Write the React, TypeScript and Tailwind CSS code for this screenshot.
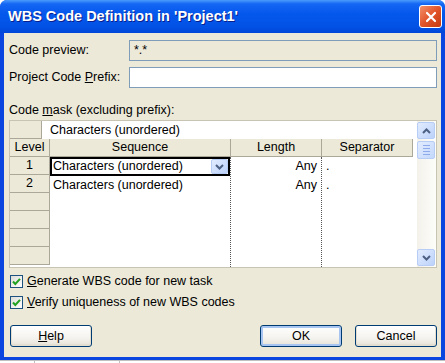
import React from 'react'

const ui = "font-['Liberation_Sans',Arial,sans-serif] text-[12.5px] text-black"

function Chevron({ up, className }: { up?: boolean; className?: string }) {
  return (
    <svg width="9" height="6" viewBox="0 0 9 6" className={className}>
      <path
        d={up ? 'M1 5 L4.5 1.5 L8 5' : 'M1 1 L4.5 4.5 L8 1'}
        fill="none"
        stroke="#4d6185"
        strokeWidth="2"
      />
    </svg>
  )
}

function BlueButton({ up, className }: { up?: boolean; className?: string }) {
  return (
    <div
      className={`flex items-center justify-center rounded-[2px] border border-[#b7cdf5] bg-[linear-gradient(135deg,#e2ecff,#bcd2fa)] ${className ?? ''}`}
    >
      <Chevron up={up} />
    </div>
  )
}

function Checkbox({ label, hot }: { label: string; hot: string }) {
  const rest = label.slice(1)
  return (
    <div className="flex h-[16px] items-center gap-[4px] pl-[1px]">
      <div className="flex h-[13px] w-[13px] items-center justify-center border border-[#1c5180] bg-[linear-gradient(135deg,#dcdcd7,#ffffff)]">
        <svg width="9" height="9" viewBox="0 0 9 9">
          <path d="M1 4.5 L3.3 7 L8 1.8" fill="none" stroke="#21a121" strokeWidth="2" />
        </svg>
      </div>
      <span>
        <span className="underline">{hot}</span>
        {rest}
      </span>
    </div>
  )
}

function XpButton({ children, focused, className }: { children: React.ReactNode; focused?: boolean; className?: string }) {
  return (
    <div
      className={`flex h-[22px] items-center justify-center rounded-[3px] border border-[#003c74] bg-[linear-gradient(to_bottom,#ffffff_0%,#f4f3ee_60%,#e6e2d6_100%)] ${
        focused ? 'shadow-[inset_0_0_0_2px_#a8c4f0]' : 'shadow-[inset_0_-1px_0_1px_#e3ded0]'
      } ${className ?? ''}`}
    >
      {children}
    </div>
  )
}

const levelCell = 'h-[18px] border-b border-r border-[#aca899] bg-[#ece9d8] flex items-center justify-center'
const header = 'h-[18px] border-b border-r border-[#aca899] bg-[#ece9d8] flex items-center justify-center'

export default function App() {
  return (
    <div className={`flex h-[363px] w-[445px] flex-col overflow-hidden bg-white ${ui}`}>
      <div className="flex h-[360px] flex-col overflow-hidden rounded-t-[7px] bg-[#0b45e0]">
        {/* title bar */}
        <div className="flex h-[33px] shrink-0 items-center justify-between bg-[linear-gradient(to_bottom,#4a9bfc_0%,#1466f4_12%,#0558ec_40%,#0252e6_80%,#0147d8_100%)] pl-[8px] pr-[3px]">
          <span className="font-['Liberation_Sans',Arial,sans-serif] text-[14.5px] font-bold text-white [text-shadow:1px_1px_0_#0a1f8c]">
            WBS Code Definition in 'Project1'
          </span>
          <div className="flex h-[23px] w-[23px] items-center justify-center rounded-[3px] border border-white bg-[linear-gradient(135deg,#f2906a,#e2542a_50%,#c43a10)]">
            <svg width="12" height="12" viewBox="0 0 12 12">
              <path d="M2 2 L10 10 M10 2 L2 10" stroke="white" strokeWidth="2.2" strokeLinecap="round" />
            </svg>
          </div>
        </div>

        {/* body */}
        <div className="mx-[4px] mb-[3px] flex flex-1 flex-col bg-[#ece9d8] pl-[5px] pr-[4px] pt-[7px]">
          <div className="flex h-[21px] items-center">
            <span className="w-[120px]">Code preview:</span>
            <div className="flex h-[21px] flex-1 items-center border border-[#7f9db9] bg-[#ece9d8] pl-[4px]">*.*</div>
          </div>
          <div className="mt-[6px] flex h-[21px] items-center">
            <span className="w-[120px]">
              Project Code <span className="underline">P</span>refix:
            </span>
            <div className="h-[21px] flex-1 border border-[#7f9db9] bg-white" />
          </div>

          <div className="mt-[14px] h-[16px] leading-[16px]">
            Code <span className="underline">m</span>ask (excluding prefix):
          </div>

          {/* grid */}
          <div className="mt-[2px] flex h-[148px] border border-[#c7c4b4] bg-white">
            <div className="flex flex-1 flex-col">
              <div className="flex h-[18px]">
                <div className="w-[32px] border-b border-r border-[#aca899] bg-[#ece9d8]" />
                <div className="flex flex-1 items-center pl-[8px]">Characters (unordered)</div>
              </div>
              <div className="flex">
                <div className={`${header} w-[40px]`}>Level</div>
                <div className={`${header} w-[181px]`}>Sequence</div>
                <div className={`${header} w-[91px]`}>Length</div>
                <div className={`${header} w-[91px]`}>Separator</div>
              </div>
              <div className="flex flex-1">
                <div className="flex w-[40px] flex-col">
                  <div className={levelCell}>1</div>
                  <div className={levelCell}>2</div>
                  <div className={levelCell} />
                  <div className={levelCell} />
                  <div className={levelCell} />
                  <div className={levelCell} />
                </div>
                <div className="flex w-[180px] flex-col">
                  <div className="flex h-[19px] items-center border-2 border-black pl-[1px]">
                    <span className="flex-1">Characters (unordered)</span>
                    <BlueButton className="h-[15px] w-[17px]" />
                  </div>
                  <div className="flex h-[18px] items-center pl-[3px]">Characters (unordered)</div>
                </div>
                <div className="flex w-[91px] flex-col border-l border-dotted border-[#555]">
                  <div className="flex h-[19px] items-center justify-end pr-[4px]">Any</div>
                  <div className="flex h-[18px] items-center justify-end pr-[4px]">Any</div>
                </div>
                <div className="flex w-[91px] flex-col border-l border-dotted border-[#555]">
                  <div className="flex h-[19px] items-center pl-[4px]">.</div>
                  <div className="flex h-[18px] items-center pl-[4px]">.</div>
                </div>
              </div>
            </div>
            {/* scrollbar */}
            <div className="flex w-[19px] flex-col bg-[linear-gradient(to_right,#f3f1ea,#fdfdfa)] py-[1px]">
              <BlueButton up className="h-[17px] w-[18px]" />
              <div className="mt-[2px] flex h-[18px] w-[18px] flex-col items-center justify-center gap-[2px] rounded-[2px] border border-[#b7cdf5] bg-[linear-gradient(135deg,#e2ecff,#c4d8fb)]">
                <div className="h-px w-[7px] bg-[#8faaeb]" />
                <div className="h-px w-[7px] bg-[#8faaeb]" />
                <div className="h-px w-[7px] bg-[#8faaeb]" />
                <div className="h-px w-[7px] bg-[#8faaeb]" />
              </div>
              <div className="flex-1" />
              <BlueButton className="h-[17px] w-[18px]" />
            </div>
          </div>

          <div className="mt-[5px]">
            <Checkbox hot="G" label="Generate WBS code for new task" />
          </div>
          <div className="mt-[5px]">
            <Checkbox hot="V" label="Verify uniqueness of new WBS codes" />
          </div>

          <div className="mt-[15px] flex items-center pl-[1px]">
            <XpButton className="w-[82px]">
              <span>
                <span className="underline">H</span>elp
              </span>
            </XpButton>
            <div className="flex-1" />
            <XpButton focused className="w-[82px]">
              OK
            </XpButton>
            <XpButton className="ml-[13px] w-[82px]">Cancel</XpButton>
          </div>
        </div>
      </div>
      <div className="flex h-[3px] border-t border-[#c0c0c0]">
        <div className="w-[35px] border-r border-[#c0c0c0]" />
        <div className="w-[85px] border-r border-[#c0c0c0]" />
      </div>
    </div>
  )
}
